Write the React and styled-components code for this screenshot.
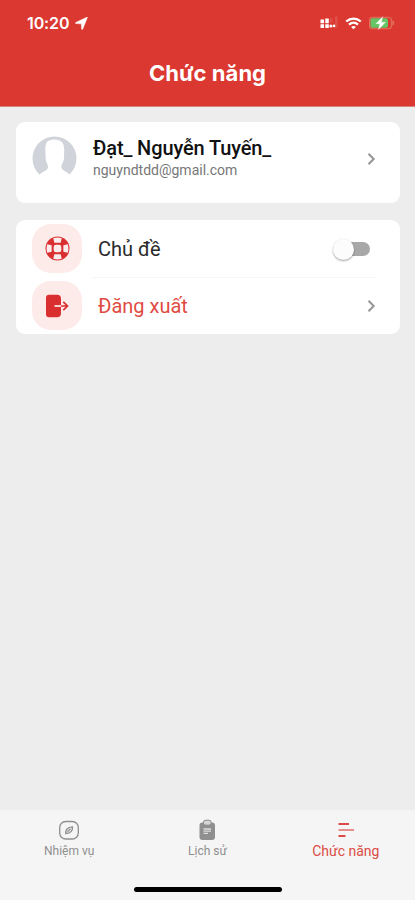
import React from 'react';
import styled, { createGlobalStyle } from 'styled-components';

const Global = createGlobalStyle`
  * { box-sizing: border-box; }
  body { margin: 0; background: #ededed; font-family: Roboto, "Noto Sans", sans-serif; }
  svg { display: block; flex: none; }
`;

const Screen = styled.div`
  width: 415px;
  height: 900px;
  display: flex;
  flex-direction: column;
  overflow: hidden;
  background: #ededed;
`;

const Header = styled.header`
  height: 107px;
  flex: none;
  background: #da3831;
  border-bottom: 1px solid #d88582;
  color: #fff;
  font-family: Inter, sans-serif;
`;

const StatusBar = styled.div`
  height: 46px;
  display: flex;
  align-items: center;
  justify-content: space-between;
  padding: 0 19px 0 27px;
`;

const StatusGroup = styled.div`
  display: flex;
  align-items: center;
  gap: ${(p) => p.$gap}px;
`;

const Time = styled.span`
  font-size: 16px;
  font-weight: 600;
  line-height: 20px;
  letter-spacing: -0.1px;
`;

const Title = styled.h1`
  margin: 13px 0 0;
  text-align: center;
  font-size: 22px;
  font-weight: 700;
  line-height: 28px;
  letter-spacing: 0.05px;
`;

const Content = styled.main`
  flex: 1;
  display: flex;
  flex-direction: column;
  gap: 17px;
  padding: 15px 15px 0 16px;
`;

const Card = styled.section`
  background: #fff;
  border-radius: 9px;
`;

const Profile = styled(Card)`
  height: 81px;
  display: flex;
  align-items: flex-start;
  padding: 14px 23px 0 16px;
`;

const Identity = styled.div`
  flex: 1;
  margin-left: 16px;
  display: flex;
  flex-direction: column;
`;

const Name = styled.div`
  color: #111;
  font-size: 20px;
  line-height: 25px;
  font-weight: 500;
  letter-spacing: -0.12px;
`;

const Email = styled.div`
  color: #777;
  font-size: 14px;
  line-height: 18px;
`;

const ProfileArrow = styled.div`
  padding-top: 16px;
`;

const Menu = styled(Card)`
  height: 114px;
  padding: 4px 23px 0 16px;
`;

const MenuRow = styled.div`
  height: 57px;
  display: flex;
  align-items: flex-start;
`;

const IconTile = styled.div`
  width: 50px;
  height: 49px;
  border-radius: 19px;
  background: #fdebea;
  display: flex;
  align-items: center;
  justify-content: center;
`;

const RowBody = styled.div`
  flex: 1;
  height: 54px;
  margin-left: 10px;
  padding: 0 0 3px 6px;
  display: flex;
  align-items: center;
  justify-content: space-between;
  border-bottom: 1px solid ${(p) => (p.$divided ? '#f6f6f6' : 'transparent')};
`;

const RowLabel = styled.span`
  font-size: 20px;
  line-height: 26px;
  color: ${(p) => (p.$danger ? '#df4b42' : '#2a2a2a')};
`;

const Toggle = styled.span`
  width: 31px;
  height: 14px;
  margin-right: 7px;
  border-radius: 7px;
  background: #a8a8a8;
  display: flex;
  align-items: center;
`;

const Knob = styled.span`
  width: 21px;
  height: 21px;
  margin-left: -6px;
  flex: none;
  border-radius: 50%;
  background: #fcfcfc;
  box-shadow: 0 1px 2px rgba(0, 0, 0, 0.38);
`;

const BottomBar = styled.footer`
  height: 90px;
  flex: none;
  background: #f5f5f5;
  display: flex;
  flex-direction: column;
  align-items: center;
`;

const Tabs = styled.nav`
  width: 100%;
  height: 78px;
  display: grid;
  grid-template-columns: repeat(3, 1fr);
`;

const Tab = styled.div`
  display: flex;
  flex-direction: column;
  align-items: center;
  padding-top: 9px;
  color: ${(p) => (p.$active ? '#dc4c46' : '#8f8f8f')};
`;

const TabLabel = styled.span`
  font-size: ${(p) => (p.$active ? 14 : 12)}px;
  line-height: 16px;
  margin-top: 2px;
`;

const HomeIndicator = styled.div`
  width: 148px;
  height: 5px;
  border-radius: 3px;
  background: #000;
  margin-top: -1px;
`;

const LocationIcon = () => (
  <svg width="13" height="13" viewBox="0 0 14 14" fill="#fff" stroke="#fff" strokeWidth=".6">
    <path d="M13.300.500 8.300 13c-.3.700-1 .600-1.100-.100L6.800 7.400 1 7C.300 6.900.200 6.200.900 5.900L12.700.300c.400-.200.800-.100.600.200Z" />
  </svg>
);

const SignalIcon = () => (
  <svg width="18" height="14" viewBox="0 0 18 14" fill="#fff">
    <path d="M.5 3.500H4v3.800H.500ZM.500 8.300H4v3.700H.500ZM5.300 2.500h3.500v4.800H5.300ZM5.300 8.300h3.500v3.700H5.300Z" />
    <circle cx="10.900" cy="9.900" r="1.500" />
    <circle cx="14" cy="9.900" r="1.300" />
    <path d="M10 2.500h2.500v4H10ZM15 .500h2.500v11H15Z" opacity=".13" />
  </svg>
);

const WifiIcon = () => (
  <svg width="17" height="13" viewBox="0 0 17 13" fill="none" stroke="#fff" strokeWidth="2.300">
    <path d="M1.200 4.500c4.300-3.900 10.300-3.900 14.600 0M4 7.600c2.700-2.400 6.300-2.400 9 0" />
    <path d="M8.500 12.300 6.100 9.900c1.500-1.200 3.300-1.200 4.800 0Z" fill="#fff" stroke="none" />
  </svg>
);

const BatteryIcon = () => (
  <svg width="27" height="14" viewBox="0 0 27 14">
    <rect x=".6" y="1.300" width="21.800" height="11.400" rx="3" fill="none" stroke="#e2705f" strokeWidth="1.100" />
    <rect x="1.500" y="2.300" width="17.500" height="9.400" rx="1.800" fill="#65c466" />
    <path d="M23.300 4.200c2.700 1.200 2.700 4.400 0 5.600Z" fill="#e2705f" />
    <path d="M13.800.700 6.800 7.700h4L9.500 13.500l7-7.300h-4.200Z" fill="#fff" stroke="#fff" strokeWidth=".3" />
  </svg>
);

const Avatar = () => (
  <svg width="45" height="43" viewBox="0 0 45 43">
    <path
      fill="#d0d3d9"
      d="M7.500 38.500A22 22 0 1 1 37.500 38.500C36 36.500 32.500 35.500 30.500 33.500 29 32 29.200 29.500 30 28 31.500 26 32.300 22.500 32 19 32.500 15 32.300 11 31 7.500 28.500 2.500 17.500 2 14.500 6.500 12.800 10 13.300 15 13.600 18.500 13.200 22.500 14.200 26 15.300 28 16.300 29.700 16.300 32 15 33.500 13 35.500 9 36.500 7.500 38.500Z"
    />
  </svg>
);

const Chevron = () => (
  <svg width="12" height="14" viewBox="0 0 12 14" fill="none" stroke="#969696" strokeWidth="2">
    <path d="M3.500 1.800 8.700 7l-5.200 5.200" />
  </svg>
);

const LifebuoyIcon = () => (
  <svg width="25" height="25" viewBox="0 0 26 26">
    <circle cx="13" cy="13" r="12.500" fill="#d92f30" />
    <path
      fill="#fdecec"
      d="M8.600 2.300Q13 1 17.400 2.300L16.300 6.900H9.700ZM8.600 23.700Q13 25 17.400 23.700L16.300 19.100H9.700ZM2.300 8.600Q1 13 2.300 17.400L6.900 16.300V9.700ZM23.700 8.600Q25 13 23.700 17.400L19.100 16.300V9.700Z"
    />
    <rect x="9" y="9" width="8" height="8" rx="2.500" fill="#fdecec" />
  </svg>
);

const LogoutIcon = () => (
  <svg width="24" height="24" viewBox="0 0 24 24" fill="none">
    <path fill="#d92f30" d="M4 .800h8a4 4 0 0 1 4 4v14.400a4 4 0 0 1-4 4H4a3 3 0 0 1-3-3V3.800a3 3 0 0 1 3-3Z" />
    <path d="M9.500 12h6.500" stroke="#fdecec" strokeWidth="1.700" />
    <path d="M16 12h6M18.300 7.800 22.500 12l-4.200 4.200" stroke="#d92f30" strokeWidth="1.700" />
  </svg>
);

const CompassIcon = () => (
  <svg width="22" height="22" viewBox="0 0 22 22" fill="none" stroke="currentColor" strokeWidth="1.300">
    <rect x="1.700" y="2.500" width="18.600" height="17.500" rx="6" />
    <path d="M14.500 7.800c.2 3.200-1.200 6.700-6.800 6.700-.2-3.200 1.400-6.500 6.800-6.700ZM9.500 12.800l3-3" />
  </svg>
);

const ClipboardIcon = () => (
  <svg width="22" height="22" viewBox="0 0 22 22">
    <rect x="3.500" y="3.500" width="15.500" height="17.500" rx="3" fill="currentColor" />
    <rect x="7.300" y="1.200" width="8" height="5" rx="2.500" fill="#d5d5d5" stroke="#888" />
    <path d="M7.500 10h7.500M7.500 12.200h7.500M7.500 14.400h4.500" stroke="#ddd" strokeWidth="1.300" />
  </svg>
);

const MenuIcon = () => (
  <svg width="22" height="22" viewBox="0 0 22 22" fill="none" stroke="currentColor" strokeWidth="2">
    <path d="M3.500 5H14M3.500 17h7" />
    <path d="M3.500 11h15.500" opacity=".6" />
  </svg>
);

export default function App() {
  return (
    <>
      <Global />
      <Screen>
        <Header>
          <StatusBar>
            <StatusGroup $gap={6}>
              <Time>10:20</Time>
              <LocationIcon />
            </StatusGroup>
            <StatusGroup $gap={7}>
              <SignalIcon />
              <WifiIcon />
              <BatteryIcon />
            </StatusGroup>
          </StatusBar>
          <Title>Chức năng</Title>
        </Header>
        <Content>
          <Profile>
            <Avatar />
            <Identity>
              <Name>Đạt_ Nguyễn Tuyến_</Name>
              <Email>nguyndtdd@gmail.com</Email>
            </Identity>
            <ProfileArrow><Chevron /></ProfileArrow>
          </Profile>
          <Menu>
            <MenuRow>
              <IconTile><LifebuoyIcon /></IconTile>
              <RowBody $divided>
                <RowLabel>Chủ đề</RowLabel>
                <Toggle><Knob /></Toggle>
              </RowBody>
            </MenuRow>
            <MenuRow>
              <IconTile><LogoutIcon /></IconTile>
              <RowBody>
                <RowLabel $danger>Đăng xuất</RowLabel>
                <Chevron />
              </RowBody>
            </MenuRow>
          </Menu>
        </Content>
        <BottomBar>
          <Tabs>
            <Tab><CompassIcon /><TabLabel>Nhiệm vụ</TabLabel></Tab>
            <Tab><ClipboardIcon /><TabLabel>Lịch sử</TabLabel></Tab>
            <Tab $active><MenuIcon /><TabLabel $active>Chức năng</TabLabel></Tab>
          </Tabs>
          <HomeIndicator />
        </BottomBar>
      </Screen>
    </>
  );
}
